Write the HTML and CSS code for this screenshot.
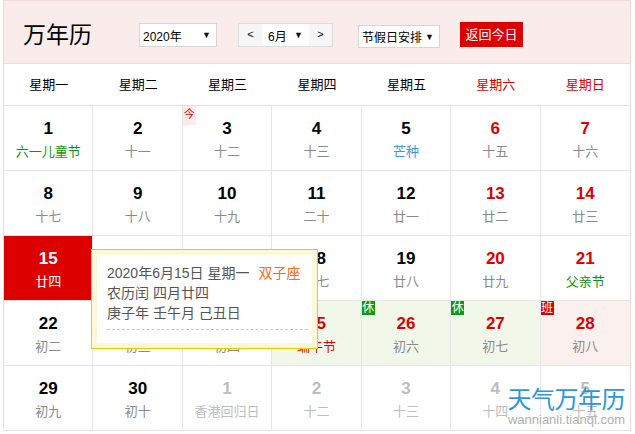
FILE: index.html
```html
<!DOCTYPE html>
<html lang="zh-CN">
  <head>
    <meta charset="UTF-8" />
    <meta name="viewport" content="width=device-width, initial-scale=1.0" />
    <title>万年历</title>
    <link rel="stylesheet" href="styles.css">
  </head>
  <body>
    <div id="calendar">
      <div class="cal-head">
        <h1 class="cal-title">万年历</h1>
        <div class="sel sel-year"><span>2020年</span><span class="arrow">▼</span></div>
        <div class="month-box">
          <span class="month-btn">&lt;</span>
          <span class="month-sel">6月<span class="arrow">▼</span></span>
          <span class="month-btn">&gt;</span>
        </div>
        <div class="sel sel-holiday"><span>节假日安排</span><span class="arrow">▼</span></div>
        <a class="btn-today" href="javascript:;">返回今日</a>
      </div>

      <div class="week-row">
        <span>星期一</span>
        <span>星期二</span>
        <span>星期三</span>
        <span>星期四</span>
        <span>星期五</span>
        <span class="red">星期六</span>
        <span class="red">星期日</span>
      </div>

      <div class="days">
        <!-- row 1 -->
        <div class="cell"><b>1</b><i class="green">六一儿童节</i></div>
        <div class="cell"><b>2</b><i>十一</i></div>
        <div class="cell"><span class="today-tag">今</span><b>3</b><i>十二</i></div>
        <div class="cell"><b>4</b><i>十三</i></div>
        <div class="cell"><b>5</b><i class="blue">芒种</i></div>
        <div class="cell wk"><b>6</b><i>十五</i></div>
        <div class="cell wk"><b>7</b><i>十六</i></div>
        <!-- row 2 -->
        <div class="cell"><b>8</b><i>十七</i></div>
        <div class="cell"><b>9</b><i>十八</i></div>
        <div class="cell"><b>10</b><i>十九</i></div>
        <div class="cell"><b>11</b><i>二十</i></div>
        <div class="cell"><b>12</b><i>廿一</i></div>
        <div class="cell wk"><b>13</b><i>廿二</i></div>
        <div class="cell wk"><b>14</b><i>廿三</i></div>
        <!-- row 3 -->
        <div class="cell selected"><b>15</b><i>廿四</i></div>
        <div class="cell"><b>16</b><i>廿五</i></div>
        <div class="cell"><b>17</b><i>廿六</i></div>
        <div class="cell"><b>18</b><i>廿七</i></div>
        <div class="cell"><b>19</b><i>廿八</i></div>
        <div class="cell wk"><b>20</b><i>廿九</i></div>
        <div class="cell wk"><b>21</b><i class="green">父亲节</i></div>
        <!-- row 4 -->
        <div class="cell"><b>22</b><i>初二</i></div>
        <div class="cell"><b>23</b><i>初三</i></div>
        <div class="cell"><b>24</b><i>初四</i></div>
        <div class="cell rest wk"><b>25</b><i class="red">端午节</i></div>
        <div class="cell rest wk"><span class="tag tag-rest">休</span><b>26</b><i>初六</i></div>
        <div class="cell rest wk"><span class="tag tag-rest">休</span><b>27</b><i>初七</i></div>
        <div class="cell work wk"><span class="tag tag-work">班</span><b>28</b><i>初八</i></div>
        <!-- row 5 -->
        <div class="cell"><b>29</b><i>初九</i></div>
        <div class="cell"><b>30</b><i>初十</i></div>
        <div class="cell other"><b>1</b><i>香港回归日</i></div>
        <div class="cell other"><b>2</b><i>十二</i></div>
        <div class="cell other"><b>3</b><i>十三</i></div>
        <div class="cell other"><b>4</b><i>十四</i></div>
        <div class="cell other"><b>5</b><i>十五</i></div>
      </div>

      <div class="tip">
        <div class="tip-inner">
          <p>2020年6月15日 星期一<span class="star">双子座</span></p>
          <p>农历闰 四月廿四</p>
          <p>庚子年 壬午月 己丑日</p>
          <div class="tip-line"></div>
        </div>
      </div>

      <div class="mark">
        <div class="mark-name">天气万年历</div>
        <div class="mark-url">wannianli.tianqi.com</div>
      </div>
    </div>
  </body>
</html>
```

FILE: styles.css
```css
* {
  margin: 0;
  padding: 0;
}
body {
  font-family: "Liberation Sans", "Noto Sans CJK SC", sans-serif;
  color: #000;
  background-color: #fff;
}
#calendar {
  width: 626px;
  margin-left: 3px;
  border: 1px solid #f1dcdb;
  border-bottom: none;
  position: relative;
}
.cal-head {
  height: 56px;
  padding: 6px 0 0 19px;
  background-color: #f9ecea;
  border-bottom: 1px solid #f1dcdb;
  display: flex;
  align-items: center;
  white-space: nowrap;
}
.cal-title {
  width: 69px;
  flex-shrink: 0;
  font-size: 23px;
  font-weight: normal;
  line-height: 30px;
  margin-bottom: 5px;
  font-family: "Noto Sans CJK SC", sans-serif;
}
.sel {
  height: 22px;
  flex-shrink: 0;
  background-color: #fff;
  border: 1px solid #d6d6d6;
  display: flex;
  align-items: center;
  justify-content: space-between;
  font-size: 12px;
}
.arrow {
  font-size: 9px;
  color: #111;
}
.sel-year {
  width: 68px;
  margin-left: 47px;
  padding: 0 5px 0 3px;
}
.sel-holiday {
  width: 72px;
  height: 21px;
  margin: 3px 0 0 25px;
  padding: 0 5px 0 3px;
}
.month-box {
  height: 22px;
  flex-shrink: 0;
  margin-left: 21px;
  border: 1px solid #dcdcdc;
  display: flex;
  font-size: 12px;
}
.month-btn {
  width: 23px;
  background-color: #f6f6f6;
  text-align: center;
  line-height: 21px;
  font-size: 11px;
}
.month-sel {
  width: 35px;
  padding: 0 6px;
  background-color: #fff;
  display: flex;
  align-items: center;
  justify-content: space-between;
}
.btn-today {
  width: 63px;
  height: 25px;
  flex-shrink: 0;
  margin: -2px 0 0 20px;
  background-color: #dc0000;
  color: #fff;
  font-size: 13px;
  line-height: 25px;
  text-align: center;
  text-decoration: none;
}
.week-row {
  height: 41px;
  border-bottom: 1px solid #f1dcdb;
  display: grid;
  grid-template-columns: repeat(7, 1fr);
  font-size: 13px;
  line-height: 41px;
  text-align: center;
}
.red {
  color: #e00000;
}
.days {
  display: grid;
  grid-template-columns: repeat(7, 1fr);
}
.cell {
  height: 64px;
  border-right: 1px solid #e6e6e6;
  border-bottom: 1px solid #e6e6e6;
  text-align: center;
  position: relative;
}
.cell:nth-child(7n) {
  border-right: none;
}
.cell b {
  display: block;
  padding-top: 13px;
  font-size: 17px;
  line-height: 20px;
}
.cell i {
  display: block;
  margin-top: 4px;
  font-style: normal;
  font-size: 13px;
  line-height: 18px;
  color: #8a8a8a;
}
.cell.wk b {
  color: #e00000;
}
.cell i.green {
  color: #0d960d;
}
.cell i.blue {
  color: #3b9ad6;
}
.cell i.red {
  color: #e00000;
}
.cell.other b,
.cell.other i {
  color: #bdbdbd;
}
.cell.rest {
  background-color: #f1f8ea;
}
.cell.work {
  background-color: #fbf0ee;
}
.cell.selected {
  background-color: #dc0000;
}
.cell.selected b,
.cell.selected i {
  color: #fff;
}
.today-tag {
  position: absolute;
  left: 0;
  top: 0;
  width: 13px;
  height: 19px;
  background-color: #fbeceb;
  color: #e00000;
  font-size: 11px;
  line-height: 16px;
}
.tag {
  position: absolute;
  left: 0;
  top: 0;
  width: 13px;
  height: 14px;
  color: #fff;
  font-size: 12px;
  line-height: 14px;
}
.tag-rest {
  background-color: #119911;
}
.tag-work {
  background-color: #dc0000;
}
.tip {
  position: absolute;
  left: 87px;
  top: 248px;
  width: 215px;
  padding: 5px;
  background-color: #fff8d8;
  border: 1px solid #f5c400;
}
.tip-inner {
  background-color: #fff;
  padding: 8px 0 13px 10px;
  margin-right: 0;
  font-size: 14px;
  line-height: 20px;
  color: #555;
  white-space: nowrap;
}
.star {
  margin-left: 9px;
  color: #ff6a13;
}
.tip-line {
  margin: 6px 4px 0 0;
  border-top: 1px dashed #c8c8c8;
}
.mark {
  position: absolute;
  right: 5px;
  top: 383px;
  text-align: right;
}
.mark-name {
  font-family: "Noto Sans CJK SC", sans-serif;
  font-size: 24px;
  line-height: 28px;
  color: #2b97d8;
  letter-spacing: -0.5px;
}
.mark-url {
  font-size: 13px;
  line-height: 16px;
  color: #b0b0b0;
}
```
